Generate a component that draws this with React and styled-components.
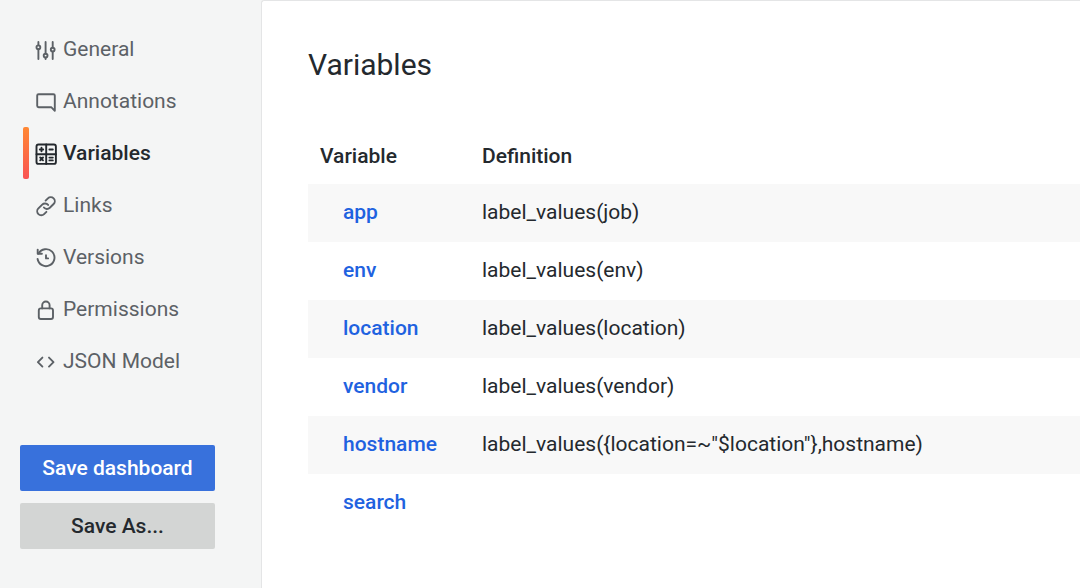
import React, { useState } from "react";
import styled, { createGlobalStyle, css } from "styled-components";

const GlobalStyle = createGlobalStyle`
  :root {
    --text: #24292e;
    --textWeak: #5c6166;
    --link: #1f62e0;
    --primary: #3871dc;
    --secondary: #d3d5d4;
    --panel: #f4f5f5;
    --border: #e4e5e6;
    --rowOdd: #f8f8f8;
    --white: #ffffff;
  }

  * {
    box-sizing: border-box;
  }

  body {
    margin: 0;
    background: var(--panel);
    color: var(--text);
    font-family: Roboto, "Liberation Sans", sans-serif;
    font-size: 21px;
    line-height: 30px;
  }
`;

const Page = styled.div`
  display: flex;
  min-height: 100vh;
`;

const Sidebar = styled.aside`
  flex: 0 0 auto;
  width: 261px;
  padding: 23px 46px 39px 20px;
`;

const Nav = styled.nav`
  display: flex;
  flex-direction: column;
  padding-left: 3px;
`;

const NavLink = styled.a`
  display: flex;
  align-items: center;
  gap: 5px;
  height: 52px;
  color: var(--textWeak);
  text-decoration: none;
  white-space: nowrap;

  &::before {
    content: "";
    align-self: stretch;
    width: 6px;
    border-radius: 2px;
  }

  ${({ $active }) =>
    $active &&
    css`
      color: var(--text);
      font-weight: 500;

      &::before {
        background: linear-gradient(#ff8833, #f95353);
      }
    `}
`;

const NavLabel = styled.span`
  padding-bottom: 1px;
`;

const Icon = styled.svg`
  flex: none;
  width: 24px;
  height: 24px;
  margin-top: 2px;
  fill: none;
  stroke: currentColor;
  stroke-width: 1.9;
  stroke-linecap: round;
  stroke-linejoin: round;
`;

const Actions = styled.div`
  display: flex;
  flex-direction: column;
  gap: 12px;
  margin-top: 58px;
`;

const Button = styled.button`
  height: 46px;
  padding: 0 12px 1px;
  border: none;
  border-radius: 2px;
  background: ${({ $primary }) =>
    $primary ? "var(--primary)" : "var(--secondary)"};
  color: ${({ $primary }) => ($primary ? "var(--white)" : "var(--text)")};
  font: inherit;
  font-weight: 500;
  cursor: pointer;
`;

const Content = styled.main`
  flex: 1;
  min-width: 0;
  padding: 46px 0 46px 46px;
  background: var(--white);
  border: solid var(--border);
  border-width: 1px 0 0 1px;
  border-top-left-radius: 3px;
`;

const Title = styled.h1`
  margin: 0 0 44px;
  font-size: 30px;
  line-height: 36px;
  font-weight: 400;
`;

const Table = styled.table`
  width: 100%;
  border-collapse: collapse;

  th,
  td {
    height: 58px;
    padding: 0 12px 2px;
    text-align: left;
  }

  th {
    height: 57px;
    padding-bottom: 0;
    font-weight: 500;
  }

  th:first-child {
    width: 162px;
  }

  td:first-child {
    padding-left: 35px;
  }

  tbody tr:nth-child(odd) {
    background: var(--rowOdd);
  }
`;

const VariableLink = styled.a`
  color: var(--link);
  font-weight: 500;
  text-decoration: none;
`;

const icons = {
  general: (
    <>
      <path d="M4.4 4v3.3M4.4 11.3v9.8M11.6 4v11.6M11.6 19.6v1.5M18.7 4v5.6M18.7 13.6v7.5" />
      <circle cx="4.4" cy="9.3" r="1.9" />
      <circle cx="11.6" cy="17.6" r="1.9" />
      <circle cx="18.7" cy="11.6" r="1.9" />
    </>
  ),
  annotations: (
    <path d="M4.6 4.2h14.8a1.4 1.4 0 0 1 1.4 1.4v15.2l-3.6-3.6H4.6a1.4 1.4 0 0 1-1.4-1.4V5.6a1.4 1.4 0 0 1 1.4-1.4z" />
  ),
  variables: (
    <>
      <rect x="2.5" y="2.5" width="19.4" height="19.4" rx="2" />
      <path d="M12.2 2.5v19.4M2.5 12.2h19.4" />
      <path d="M5.8 7.5h3.4M7.5 5.8v3.4M15.4 7.5h3.4M6.2 15.5l2.8 2.8M9 15.5l-2.8 2.8M15.4 15.6h3.4M15.4 18.4h3.4" />
    </>
  ),
  links: (
    <>
      <path d="M9.9 13.5a4 4 0 0 0 5.9.3l3.8-3.8a4 4 0 0 0-5.7-5.7l-2.3 2.3" />
      <path d="M14.1 10.9a4 4 0 0 0-5.9-.3L4.4 14.4a4 4 0 0 0 5.7 5.7l2.3-2.3" />
    </>
  ),
  versions: (
    <>
      <path d="M3.7 3.6v4.2h4.2" />
      <path d="M4.5 7.6A8.5 8.5 0 1 1 3.6 13" />
      <path d="M12 9.2v3.2h2.1" />
    </>
  ),
  permissions: (
    <>
      <rect x="4.8" y="10.4" width="14.2" height="10.6" rx="2" />
      <path d="M8.2 10.4V7.2a3.7 3.7 0 0 1 7.4 0v3.2" />
    </>
  ),
  json: <path d="M8.4 7.6L3.9 12.1l4.5 4.5M15 7.6l4.5 4.5-4.5 4.5" />,
};

const sections = [
  { id: "general", label: "General" },
  { id: "annotations", label: "Annotations" },
  { id: "variables", label: "Variables" },
  { id: "links", label: "Links" },
  { id: "versions", label: "Versions" },
  { id: "permissions", label: "Permissions" },
  { id: "json", label: "JSON Model" },
];

const variables = [
  { name: "app", definition: "label_values(job)" },
  { name: "env", definition: "label_values(env)" },
  { name: "location", definition: "label_values(location)" },
  { name: "vendor", definition: "label_values(vendor)" },
  {
    name: "hostname",
    definition: 'label_values({location=~"$location"},hostname)',
  },
  { name: "search", definition: "" },
];

function SettingsNav() {
  const [active, setActive] = useState("variables");

  return (
    <Nav>
      {sections.map(({ id, label }) => (
        <NavLink
          key={id}
          href={`#${id}`}
          $active={id === active}
          onClick={() => setActive(id)}
        >
          <Icon viewBox="0 0 24 24" aria-hidden="true">
            {icons[id]}
          </Icon>
          <NavLabel>{label}</NavLabel>
        </NavLink>
      ))}
    </Nav>
  );
}

function VariablesTable() {
  return (
    <Table>
      <thead>
        <tr>
          <th>Variable</th>
          <th>Definition</th>
        </tr>
      </thead>
      <tbody>
        {variables.map(({ name, definition }) => (
          <tr key={name}>
            <td>
              <VariableLink href={`#edit-${name}`}>{name}</VariableLink>
            </td>
            <td>{definition}</td>
          </tr>
        ))}
      </tbody>
    </Table>
  );
}

export default function App() {
  return (
    <>
      <GlobalStyle />
      <Page>
        <Sidebar>
          <SettingsNav />
          <Actions>
            <Button type="button" $primary>
              Save dashboard
            </Button>
            <Button type="button">Save As...</Button>
          </Actions>
        </Sidebar>
        <Content>
          <Title>Variables</Title>
          <VariablesTable />
        </Content>
      </Page>
    </>
  );
}
